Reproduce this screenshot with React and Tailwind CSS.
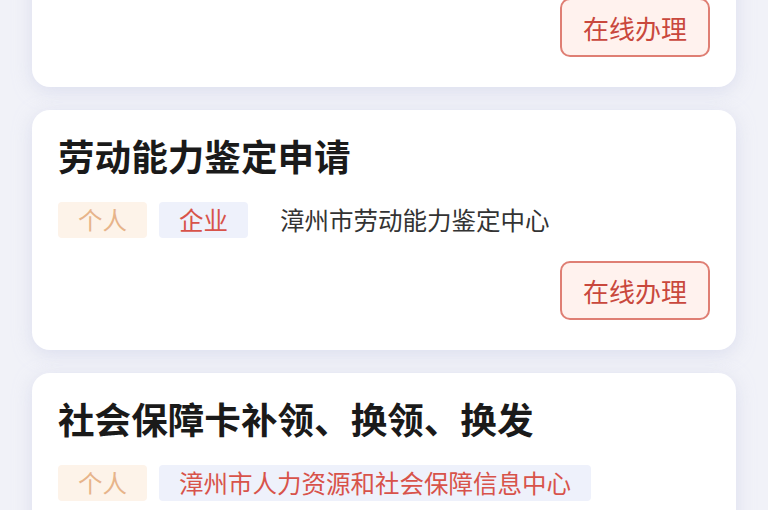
const services = [
  {
    title: '社会保险个人权益记录查询',
    tags: [{ label: '个人', kind: 'person' }],
    org: '漳州市社会劳动保险中心',
    action: true,
  },
  {
    title: '劳动能力鉴定申请',
    tags: [{ label: '个人', kind: 'person' }, { label: '企业', kind: 'corp' }],
    org: '漳州市劳动能力鉴定中心',
    action: true,
  },
  {
    title: '社会保障卡补领、换领、换发',
    tags: [{ label: '个人', kind: 'person' }, { label: '漳州市人力资源和社会保障信息中心', kind: 'corp' }],
    org: null,
    action: true,
  },
]

function Tag({ label, kind }) {
  const cls = kind === 'person'
    ? 'bg-[#fdf3e9] text-[#e7b48a]'
    : 'bg-[#eef1fb] text-[#d8534a]'
  return (
    <span className={`h-[36px] px-[20px] flex items-center rounded-[4px] text-[24.5px] leading-none ${cls}`}>
      {label}
    </span>
  )
}

function ServiceCard({ s }) {
  return (
    <div className="bg-white rounded-[18px] px-[26px] pt-[24px] pb-[30px] shadow-[0_4px_18px_rgba(205,208,232,0.6)]">
      <h2 className="text-[36.6px] leading-[43px] font-bold text-[#1a1a1a]">{s.title}</h2>
      <div className="mt-[25px] flex items-center gap-[12px]">
        {s.tags.map((t) => <Tag key={t.label} {...t} />)}
        {s.org && <span className="ml-[20px] text-[24.5px] leading-none text-[#333]">{s.org}</span>}
      </div>
      {s.action && (
        <div className="mt-[23px] flex justify-end">
          <button className="w-[150px] h-[59px] rounded-[10px] border-2 border-[#df7f74] bg-[#fff2ee] text-[26px] text-[#c9483d] flex items-center justify-center">
            在线办理
          </button>
        </div>
      )}
    </div>
  )
}

export default function App() {
  return (
    <div
      className="w-[768px] h-[510px] overflow-hidden bg-[#f1f2f8]"
      style={{ fontFamily: '"Noto Sans CJK SC", "Noto Sans", sans-serif' }}
    >
      <div className="mx-[32px] mt-[-153px] flex flex-col gap-[23px]">
        {services.map((s) => <ServiceCard key={s.title} s={s} />)}
      </div>
    </div>
  )
}
